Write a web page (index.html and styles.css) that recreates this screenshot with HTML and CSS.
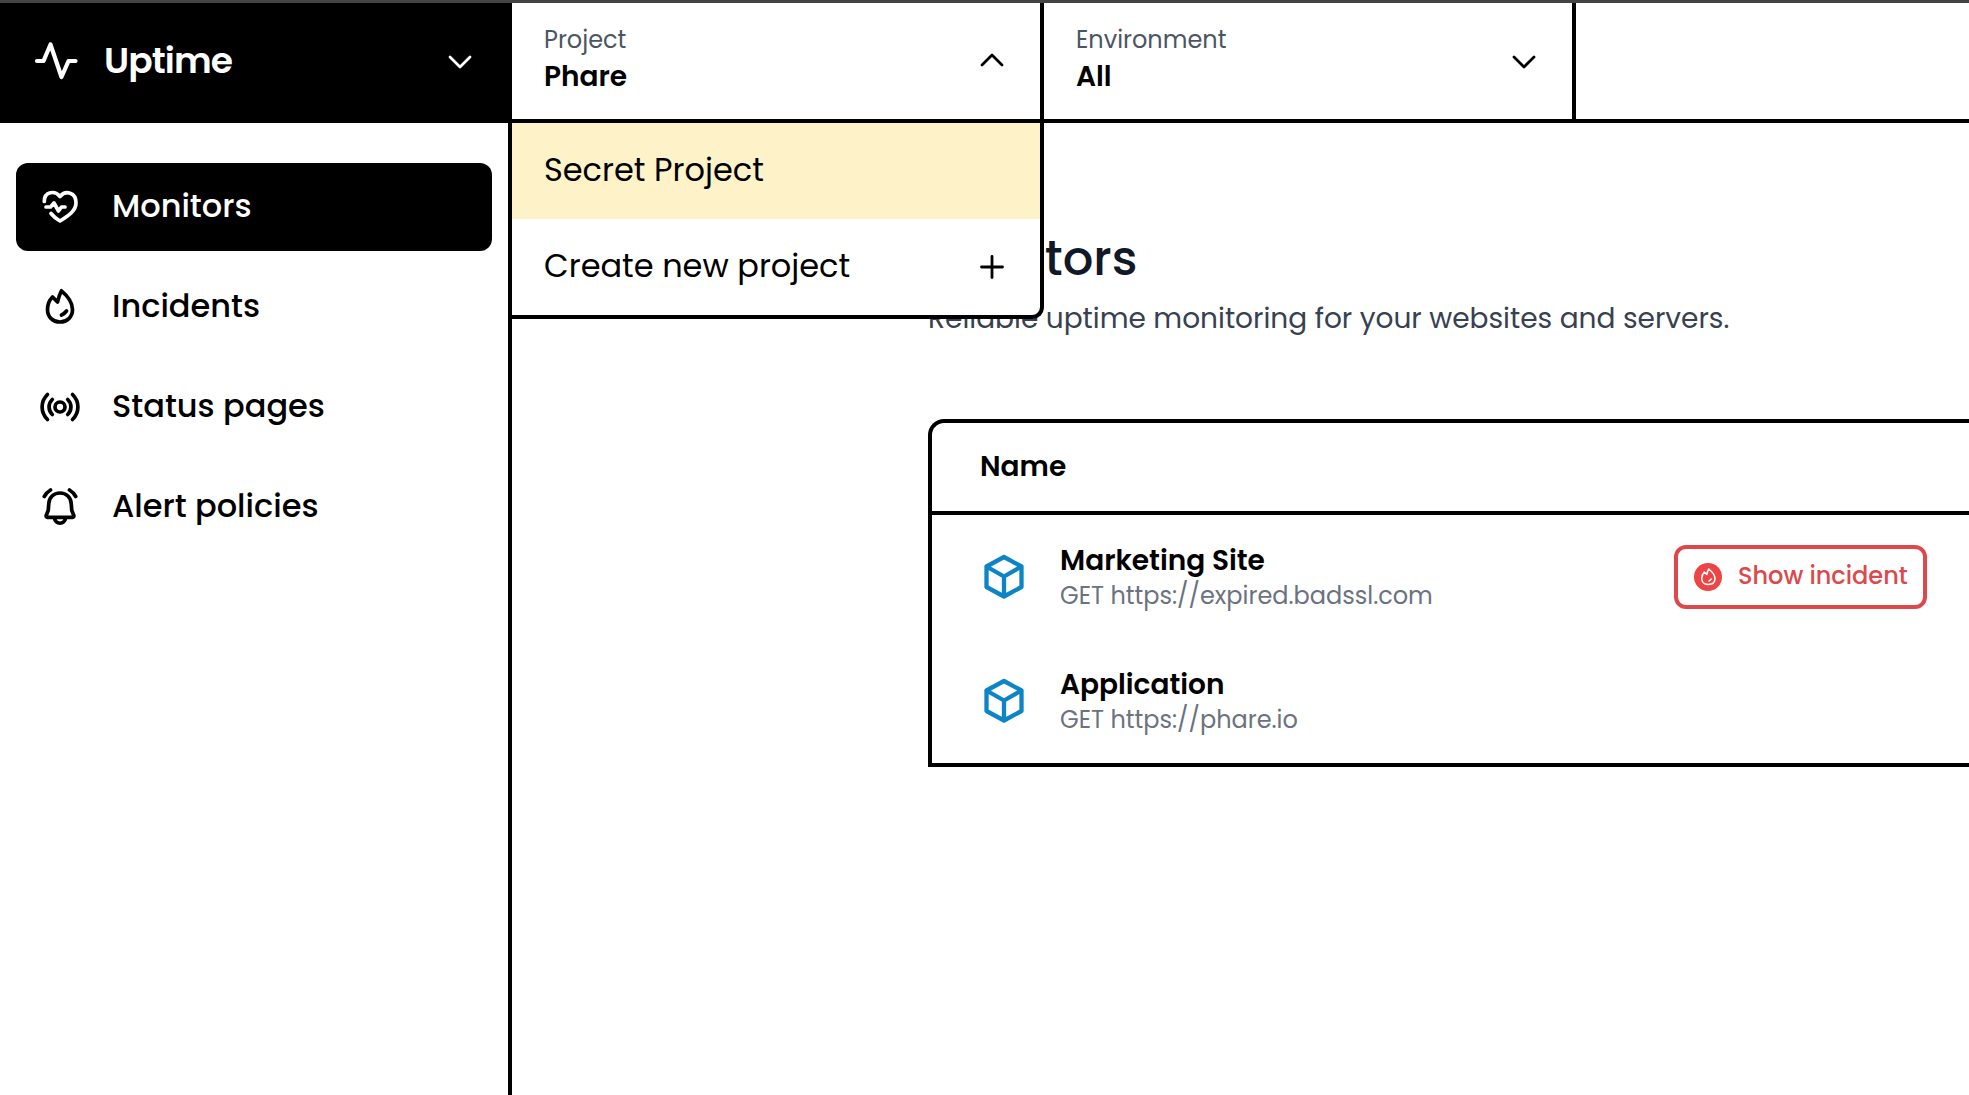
FILE: index.html
```html
<!DOCTYPE html>
<html lang="en">
<head>
<meta charset="utf-8">
<title>Uptime – Monitors</title>
<link rel="stylesheet" href="styles.css">
</head>
<body>
<div class="app">
  <aside class="sidebar">
    <button class="product">
      <svg class="product-icon" viewBox="0 0 44 44"><path d="M3 22H9.500L16.500 5.500L27.500 38L34.500 22H41.500"/></svg>
      <span class="product-name">Uptime</span>
      <svg class="chevron" viewBox="0 0 24 14"><path d="M2 2l10 10L22 2"/></svg>
    </button>
    <nav class="nav">
      <a class="nav-item active">
        <svg class="nav-icon" viewBox="0 0 40 40"><path d="M4.300 14.500C4.300 4.500 15 3 20 9.500C25.500 3 36 5 36 16C36 23.500 29 28.500 20 34C16 31.800 13.500 29.500 11 26.500M6 20H10.500L14 16L18.500 24L21.500 20H25"/></svg>
        <span>Monitors</span>
      </a>
      <a class="nav-item">
        <svg class="nav-icon" viewBox="0 0 40 40"><path d="M21.500 3.800C26.500 8 32.500 15.500 32.500 22.500C32.500 30 27 35 20 35S7.500 30 7.500 22.500C7.500 17.500 9.500 13 12.500 10L17.500 15C18.500 11 19.500 7.300 21.500 3.800ZM21.500 28C23.500 27.200 25 25.900 26.500 24"/></svg>
        <span>Incidents</span>
      </a>
      <a class="nav-item">
        <svg class="nav-icon" viewBox="0 0 40 40"><circle cx="20" cy="20" r="5"/><path d="M12.300 12.500C8 16.500 8 23.500 12.300 27.500M27.700 12.500C32 16.500 32 23.500 27.700 27.500M7.500 7.500C.300 14.500.300 25.500 7.500 32.500M32.500 7.500C39.700 14.500 39.700 25.500 32.500 32.500"/></svg>
        <span>Status pages</span>
      </a>
      <a class="nav-item">
        <svg class="nav-icon" viewBox="0 0 40 40"><path d="M20 6C13.500 6 9.200 10.500 8.800 16.500L8.200 23.500L6.200 28.500C5.900 29.500 6.400 30.300 7.400 30.300H32.600C33.600 30.300 34.100 29.500 33.800 28.500L31.800 23.500L31.200 16.500C30.800 10.500 26.500 6 20 6ZM14.500 31C15.200 38 24.800 38 25.500 31M4.300 9.500C6 6.500 8 4.500 10.500 3M35.700 9.500C34 6.500 32 4.500 29.500 3"/></svg>
        <span>Alert policies</span>
      </a>
    </nav>
  </aside>

  <div class="page">
    <header class="topbar">
      <div class="selector">
        <div class="selector-text">
          <span class="selector-label">Project</span>
          <span class="selector-value">Phare</span>
        </div>
        <svg class="chevron up" viewBox="0 0 24 14"><path d="M2 12L12 2l10 10"/></svg>
        <div class="menu">
          <a class="menu-item highlighted"><span>Secret Project</span></a>
          <a class="menu-item">
            <span>Create new project</span>
            <svg class="plus" viewBox="0 0 24 24"><path d="M12 1.500v21M1.500 12h21"/></svg>
          </a>
        </div>
      </div>
      <div class="selector">
        <div class="selector-text">
          <span class="selector-label">Environment</span>
          <span class="selector-value">All</span>
        </div>
        <svg class="chevron" viewBox="0 0 24 14"><path d="M2 2l10 10L22 2"/></svg>
      </div>
    </header>

    <main class="content">
      <h1 class="title">Monitors</h1>
      <p class="subtitle">Reliable uptime monitoring for your websites and servers.</p>
      <section class="table">
        <div class="table-head">Name</div>
        <div class="row">
          <svg class="cube" viewBox="0 0 42 46"><path d="M21 3L38.500 12.500V33L21 42.500L3.500 33V12.500ZM3.500 12.500L21 22.500L38.500 12.500M21 22.500V42.500"/></svg>
          <div class="monitor">
            <span class="monitor-name">Marketing Site</span>
            <span class="monitor-url">GET https://expired.badssl.com</span>
          </div>
          <button class="incident">
            <svg class="incident-icon" viewBox="0 0 28 28"><circle cx="14" cy="14" r="14"/><path d="M14.800 6C17.800 8.500 21 12 21 15.500C21 19.500 18 21.500 14.200 21.500S7.700 19 7.700 15.500C7.700 13 8.700 10.800 10.300 9L12.800 11.500C13.300 9.500 13.800 7.500 14.800 6ZM15 18C16 17.500 16.800 16.900 17.200 16"/></svg>
            <span>Show incident</span>
          </button>
        </div>
        <div class="row">
          <svg class="cube" viewBox="0 0 42 46"><path d="M21 3L38.500 12.500V33L21 42.500L3.500 33V12.500ZM3.500 12.500L21 22.500L38.500 12.500M21 22.500V42.500"/></svg>
          <div class="monitor">
            <span class="monitor-name">Application</span>
            <span class="monitor-url">GET https://phare.io</span>
          </div>
        </div>
      </section>
    </main>
  </div>
</div>
</body>
</html>
```
FILE: styles.css
```css
* { box-sizing: border-box; }

body {
  margin: 0;
  font-family: Poppins, Inter, sans-serif;
  color: #000;
  background: #fff;
  overflow: hidden;
}

button {
  font: inherit;
  color: inherit;
  text-align: left;
}

svg {
  flex: none;
  fill: none;
  stroke: currentColor;
  stroke-linecap: round;
  stroke-linejoin: round;
}

.app {
  display: flex;
  height: 1095px;
  border-top: 3px solid #444;
}

/* Sidebar */
.sidebar {
  width: 512px;
  flex: none;
  border-right: 4px solid #000;
}

.product {
  display: flex;
  align-items: center;
  width: 512px;
  height: 120px;
  padding: 0 40px 4px 34px;
  border: 0;
  background: #000;
  color: #fff;
}

.product-icon { width: 44px; height: 44px; stroke-width: 4.200; }

.product-name {
  flex: 1;
  margin-left: 26px;
  padding-bottom: 1px;
  font-size: 36px;
  font-weight: 600;
  line-height: 44px;
  letter-spacing: -.025em;
}

.chevron { width: 24px; height: 14px; margin-top: 2px; stroke-width: 2.800; }
.chevron.up { margin-top: -2px; }

.nav {
  display: flex;
  flex-direction: column;
  gap: 12px;
  padding: 40px 16px;
}

.nav-item {
  display: flex;
  align-items: center;
  gap: 32px;
  height: 88px;
  padding-left: 24px;
  border-radius: 12px;
  font-size: 32px;
  font-weight: 500;
}

.nav-item span { padding-bottom: 3px; }
.nav-item.active { background: #000; color: #fff; }
.nav-icon { width: 40px; height: 40px; stroke-width: 3.700; }

/* Top bar */
.page { flex: 1; min-width: 0; }

.topbar {
  display: flex;
  height: 120px;
  border-bottom: 4px solid #000;
}

.selector {
  position: relative;
  display: flex;
  align-items: center;
  justify-content: space-between;
  width: 532px;
  padding: 0 36px 0 32px;
  border-right: 4px solid #000;
}

.selector-text {
  display: flex;
  flex-direction: column;
  gap: 1px;
  padding-bottom: 5px;
  line-height: 36px;
}

.selector-label { font-size: 24px; color: #4b5563; }
.selector-value { font-size: 28px; font-weight: 600; }

.menu {
  position: absolute;
  top: 120px;
  left: 0;
  z-index: 1;
  width: 532px;
  border: solid #000;
  border-width: 0 4px 4px 0;
  border-radius: 0 0 12px 0;
  background: #fff;
}

.menu-item {
  display: flex;
  align-items: center;
  justify-content: space-between;
  height: 96px;
  padding: 0 36px 0 32px;
  font-size: 32px;
}

.menu-item span { padding-bottom: 3px; }
.menu-item.highlighted { background: #fdf2c8; }
.plus { width: 24px; height: 24px; stroke-width: 2.800; }

/* Main content */
.content { padding: 108px 0 0 416px; }

.title {
  margin: 0;
  font-size: 48px;
  font-weight: 500;
  line-height: 56px;
  color: #111827;
}

.subtitle {
  margin: 12px 0 80px;
  font-size: 28px;
  line-height: 40px;
  color: #374151;
}

.table {
  border: 4px solid #000;
  border-right: 0;
  border-radius: 16px 0 0 0;
}

.table-head {
  height: 92px;
  padding-left: 48px;
  border-bottom: 4px solid #000;
  font-size: 28px;
  font-weight: 600;
  line-height: 87px;
}

.row {
  display: flex;
  align-items: center;
  height: 124px;
  padding: 0 42px 0 51px;
}

.cube { width: 42px; height: 46px; stroke-width: 4.300; color: #0d84c6; }

.monitor {
  display: flex;
  flex: 1;
  flex-direction: column;
  margin-left: 35px;
  padding-top: 2px;
  line-height: 35px;
}

.monitor-name { font-size: 28px; font-weight: 600; }
.monitor-url { font-size: 24px; color: #6b7280; }

.incident {
  display: flex;
  align-items: center;
  gap: 16px;
  width: 253px;
  height: 64px;
  padding: 0 0 0 16px;
  border: 4px solid #dc484c;
  border-radius: 12px;
  background: #fff;
  color: #dc484c;
  font-size: 24px;
  font-weight: 500;
}

.incident span { padding-bottom: 3px; white-space: nowrap; }
.incident-icon { width: 28px; height: 28px; color: #fff; stroke-width: 1.600; }
.incident-icon circle { fill: #ef4444; stroke: none; }
```
